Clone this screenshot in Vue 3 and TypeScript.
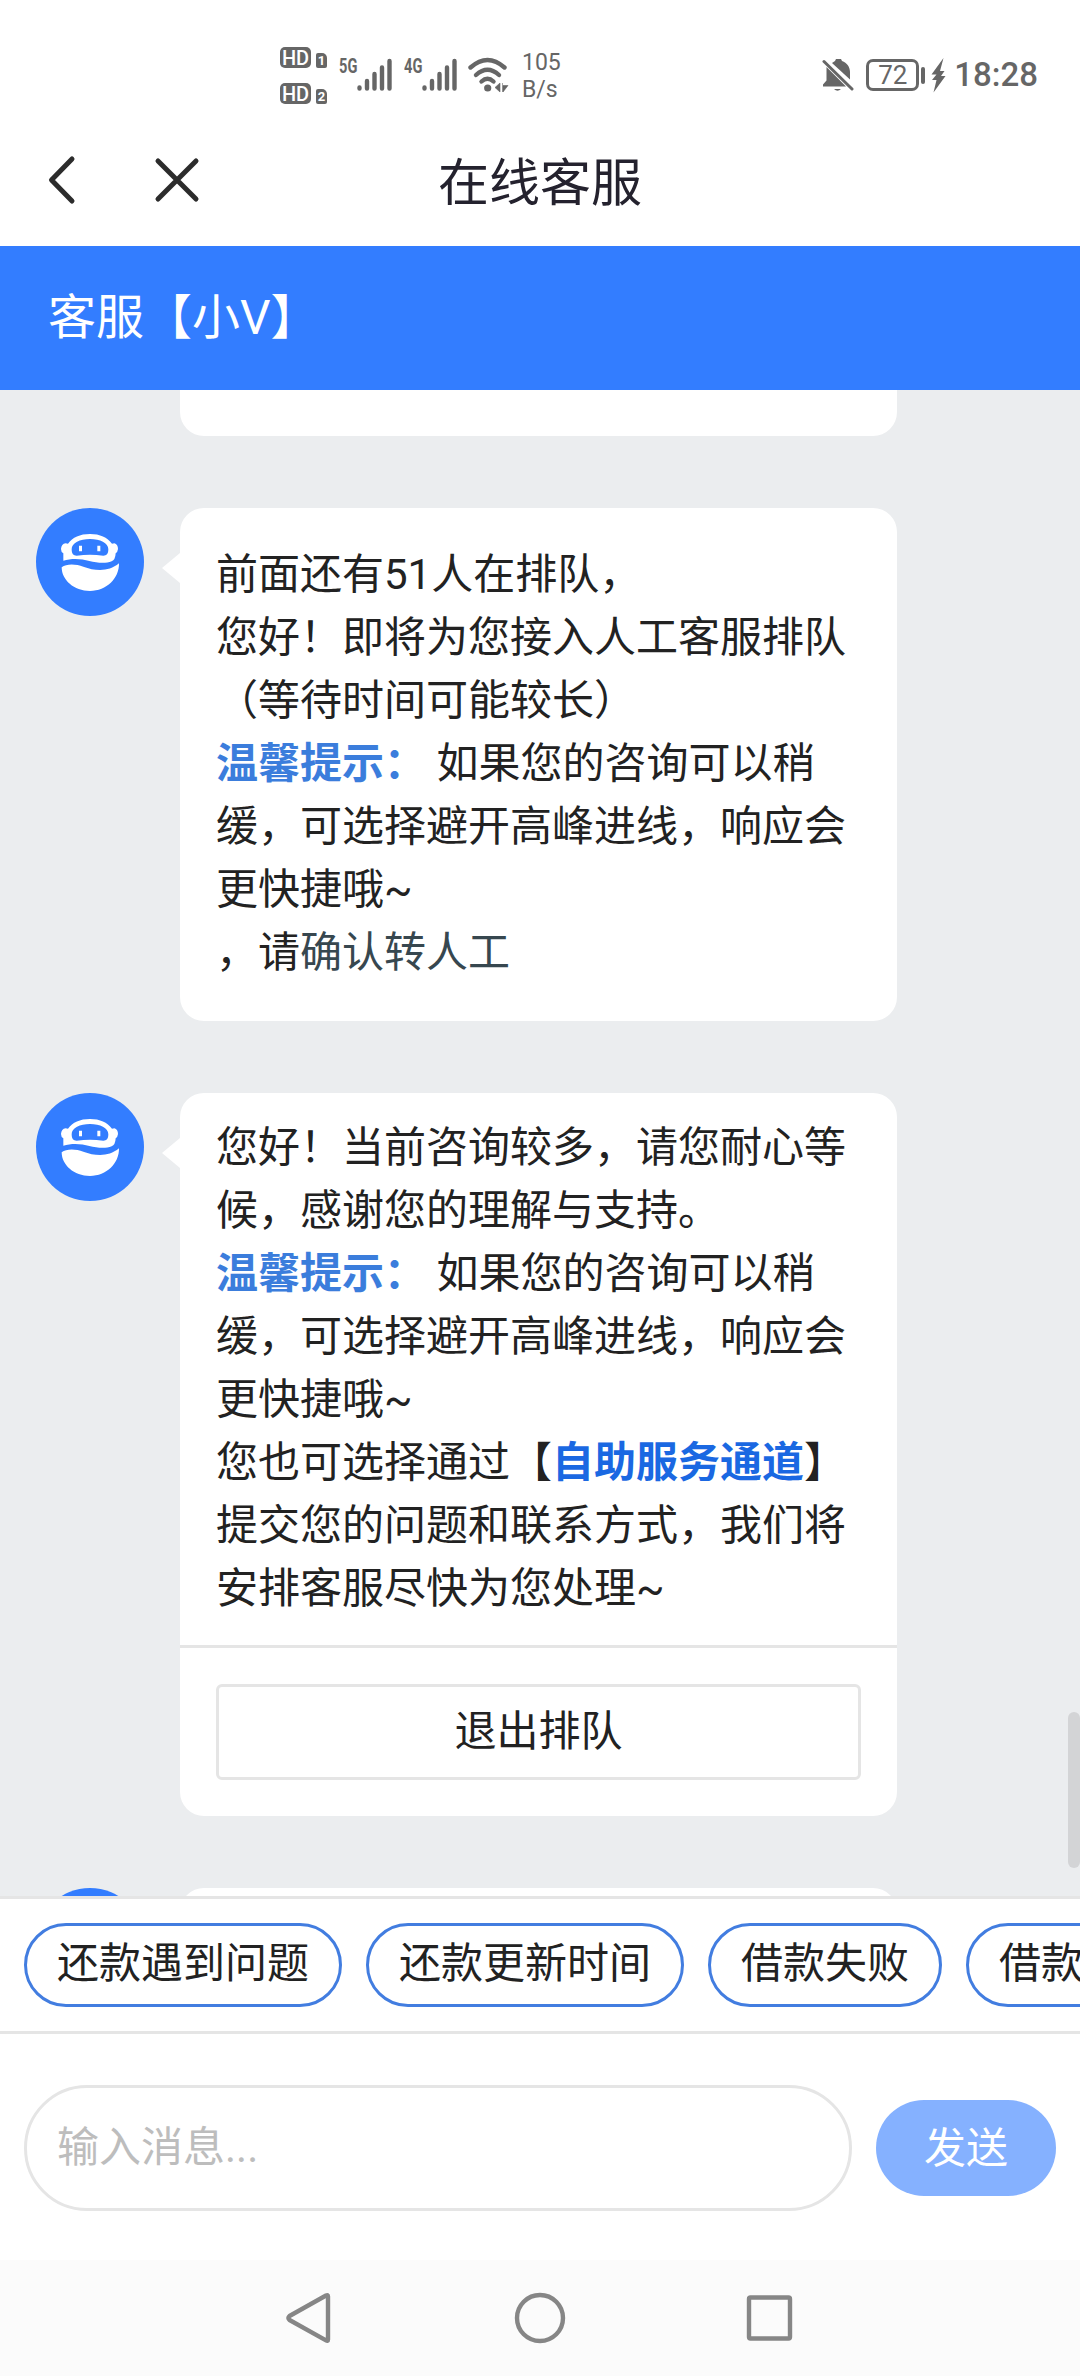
<script setup lang="ts">
const quickReplies: string[] = ['还款遇到问题', '还款更新时间', '借款失败', '借款额度']
const simSlots: number[] = [1, 2]
const networks: string[] = ['5G', '4G']
</script>

<template>
  <div class="phone">
    <header class="top">
      <div class="status">
        <div class="sims">
          <div v-for="n in simSlots" :key="n" class="sim">
            <span class="hd">HD</span><span class="slot">{{ n }}</span>
          </div>
        </div>
        <div v-for="net in networks" :key="net" class="network">
          <span class="gen">{{ net }}</span>
          <svg class="bars" width="36" height="34" viewBox="0 0 36 34">
            <path d="M2.5 29.5v1M10 23v7.5M17.5 16v14.5M25 9.500v21M32.500 3v27.500" />
          </svg>
        </div>
        <svg class="wifi" width="42" height="36" viewBox="0 0 42 36">
          <g fill="none" stroke="#666" stroke-width="4.400" stroke-linecap="round">
            <path d="M2.500 10.500Q19.500-4.500 36.500 10.500" />
            <path d="M8 18Q19.500 7.500 31 18" />
            <path d="M13.500 24.500Q19.500 19 25.500 24.500" />
          </g>
          <circle cx="19.700" cy="31" r="3.600" fill="#666" />
          <path d="M32 26v9l-5-4.500zM34.500 26v9M35 35v-6.500h5z" fill="#666" stroke="#666" stroke-width=".6" />
        </svg>
        <div class="speed"><span>105</span><span>B/s</span></div>
        <div class="status-right">
          <svg width="32" height="34" viewBox="0 0 32 34" fill="#666">
            <path d="M4.500 9L24 28.500H1v-2l3.500-4zM10 5l3-2 1-2h5l1 2c5 1.800 8 6 8 11v7.500z" />
            <path d="M2 3.500L30 31" stroke="#666" stroke-width="3" stroke-linecap="round" />
            <path d="M12 31h7q-3.500 3.500-7 0z" />
          </svg>
          <span class="battery">72</span>
          <span class="nub"></span>
          <svg class="bolt" width="15" height="36" viewBox="0 0 15 36">
            <path d="M12.500 1L.5 17.500h5L1 23h4.500L2.500 35.500 14.500 19H10l3.500-5H9z" fill="#666" />
          </svg>
          <span class="time">18:28</span>
        </div>
      </div>
      <div class="nav">
        <svg class="nav-icons" width="200" height="60" viewBox="0 0 200 60">
          <path d="M72 9L51.500 30 72 51M158 11l38 38M196 11l-38 38" />
        </svg>
        <h1>在线客服</h1>
      </div>
    </header>

    <div class="agent">客服【小V】</div>

    <main class="chat">
      <div class="bubble peek"></div>

      <section class="message">
        <svg class="avatar" viewBox="0 0 324 324">
          <circle cx="162" cy="162" r="162" fill="#337dff" />
          <g id="robot" transform="translate(-108 -84)">
            <path fill="#fff" d="M190 242V220Q183 216 183 207 184 192 197 190L204 191C218 172 240 162 270 162S322 172 336 191L343 190Q354 194 354 207 353 216 347 220 346 240 335 244C315 252 290 248 268 243 245 236 215 234 190 242Z" />
            <path fill="#337dff" d="M215 208C215 188 240 177 270 177S325 188 325 208C325 222 320 227 310 227Q270 221 230 227C220 227 215 222 215 208Z" />
            <path fill="#fff" d="M237 197h9v17h-9zM292 197h9v17h-9z" />
            <path fill="#fff" d="M185 262C200 250 228 252 250 260 285 273 325 277 357 250 358 295 320 333 270 333 222 333 185 300 185 262Z" />
          </g>
        </svg>
        <div class="bubble tail">
          <div class="text roomy">
            前面还有51人在排队，<br />您好！即将为您接入人工客服排队（等待时间可能较长）<br /><b class="tip">温馨提示：</b> 如果您的咨询可以稍缓，可选择避开高峰进线，响应会更快捷哦~<br />，请<a class="confirm">确认转人工</a>
          </div>
        </div>
      </section>

      <section class="message">
        <svg class="avatar" viewBox="0 0 324 324">
          <circle cx="162" cy="162" r="162" fill="#337dff" />
          <use href="#robot" />
        </svg>
        <div class="bubble tail">
          <div class="text">
            您好！当前咨询较多，请您耐心等候，感谢您的理解与支持。<br /><b class="tip">温馨提示：</b> 如果您的咨询可以稍缓，可选择避开高峰进线，响应会更快捷哦~<br />您也可选择通过【<b class="channel">自助服务通道</b>】提交您的问题和联系方式，我们将安排客服尽快为您处理~
          </div>
          <div class="actions"><button class="leave">退出排队</button></div>
        </div>
      </section>

      <section class="message">
        <svg class="avatar" viewBox="0 0 324 324"><circle cx="162" cy="162" r="162" fill="#337dff" /></svg>
        <div class="bubble next"></div>
      </section>
      <span class="scrollbar"></span>
    </main>

    <div class="quick">
      <button v-for="q in quickReplies" :key="q" class="chip">{{ q }}</button>
    </div>

    <div class="composer">
      <div class="field">输入消息...</div>
      <button class="send">发送</button>
    </div>

    <footer class="system">
      <svg width="1080" height="116" viewBox="0 0 1080 116">
        <path d="M328 36.500v43q0 2-2 .8L289.500 60q-2-2 0-4L326 35.500q2-1 2 1z" />
        <circle cx="540" cy="58" r="23" />
        <rect x="749" y="37.500" width="41" height="41" rx="1.500" />
      </svg>
    </footer>
  </div>
</template>

<style>
body {
  margin: 0;
}
</style>

<style scoped>
.phone {
  width: 1080px;
  height: 2376px;
  display: flex;
  flex-direction: column;
  overflow: hidden;
  background: #fff;
  color: #222;
  font-family: Roboto, 'Noto Sans CJK SC', sans-serif;
  font-size: 42px;
  line-height: 63px;
  text-spacing-trim: space-all;
}
button {
  font: inherit;
  color: inherit;
  margin: 0;
  padding: 0;
  background: none;
  border: 0;
  flex: none;
  white-space: nowrap;
}
svg {
  flex: none;
  display: block;
}
.top {
  height: 246px;
  flex: none;
}
.status {
  height: 126px;
  padding: 0 42px 0 280px;
  display: flex;
  align-items: flex-start;
  color: #666;
}
.sims {
  padding-top: 47px;
  width: 59px;
  display: flex;
  flex-direction: column;
  gap: 15px;
}
.sim {
  display: flex;
  align-items: flex-end;
  height: 21px;
  gap: 5px;
}
.hd,
.slot {
  background: #666;
  color: #fff;
  text-align: center;
  font-weight: 500;
}
.hd {
  width: 31px;
  height: 21px;
  border-radius: 5px;
  font-size: 20px;
  line-height: 22px;
}
.slot {
  width: 11px;
  height: 15px;
  border-radius: 2px 5px 2px 2px;
  font-size: 13px;
  line-height: 16px;
  font-weight: 700;
}
.network {
  width: 65px;
  padding-top: 58px;
  display: flex;
}
.gen {
  width: 18px;
  height: 16px;
  font-size: 20px;
  line-height: 17px;
  font-weight: 700;
  transform: scaleX(0.73);
  transform-origin: 0 0;
}
.bars {
  stroke: #666;
  stroke-width: 4.4;
  stroke-linecap: round;
  fill: none;
}
.wifi {
  margin-top: 57px;
  margin-left: -1px;
}
.speed {
  margin: 49px 0 0 12px;
  display: flex;
  flex-direction: column;
  font-size: 23px;
  line-height: 27px;
}
.status-right {
  margin-left: auto;
  margin-top: 57px;
  display: flex;
  align-items: center;
  height: 36px;
}
.battery {
  box-sizing: border-box;
  width: 53px;
  height: 32px;
  margin-left: 12px;
  border: 3px solid #666;
  border-radius: 7px;
  font-size: 26px;
  line-height: 27px;
  text-align: center;
}
.nub {
  width: 4px;
  height: 17px;
  margin: 0 6px 0 2px;
  border-radius: 2px;
  background: #666;
}
.time {
  margin-left: 8px;
  font-size: 33px;
  font-weight: 500;
  line-height: 38px;
  white-space: nowrap;
}
.nav {
  height: 120px;
  position: relative;
}
.nav-icons {
  position: absolute;
  left: 0;
  top: 24px;
  fill: none;
  stroke: #2c2c2c;
  stroke-width: 5;
  stroke-linecap: round;
  stroke-linejoin: round;
}
h1 {
  margin: 0;
  padding-top: 20px;
  text-align: center;
  font-size: 51px;
  line-height: 75px;
  font-weight: 400;
  color: #24222e;
}
.agent {
  height: 144px;
  flex: none;
  box-sizing: border-box;
  padding: 36px 48px;
  background: #337dff;
  color: #fff;
  font-size: 48px;
  line-height: 72px;
}
.chat {
  position: relative;
  height: 1506px;
  flex: none;
  overflow: hidden;
  background: #ebedef;
}
.bubble {
  position: relative;
  width: 717px;
  background: #fff;
  border-radius: 24px;
}
.peek {
  height: 46px;
  margin-left: 180px;
  border-radius: 0 0 24px 24px;
}
.message {
  display: flex;
  align-items: flex-start;
  gap: 36px;
  margin: 72px 0 0 36px;
}
.avatar {
  width: 108px;
  height: 108px;
}
.tail::before {
  content: '';
  position: absolute;
  left: -18px;
  top: 45px;
  border: solid transparent;
  border-width: 15px 18px 15px 0;
  border-right-color: #fff;
}
.text {
  padding: 23px 36px 25px;
}
.roomy {
  padding: 35px 36px 37px;
}
.tip {
  color: #3b7ddc;
}
.channel {
  color: #1a68e2;
}
.confirm {
  color: #37474f;
}
.actions {
  padding: 36px;
  border-top: 3px solid #e5e5e5;
}
.leave {
  display: block;
  box-sizing: border-box;
  width: 645px;
  height: 96px;
  padding-bottom: 2px;
  border: 3px solid #e5e5e5;
  border-radius: 6px;
}
.next {
  height: 120px;
}
.scrollbar {
  position: absolute;
  right: 0;
  top: 1322px;
  width: 12px;
  height: 156px;
  border-radius: 6px;
  background: #d3d4d6;
}
.quick {
  box-sizing: border-box;
  height: 138px;
  flex: none;
  display: flex;
  gap: 24px;
  padding: 24px;
  overflow: hidden;
  border-top: 3px solid #e5e5e5;
  border-bottom: 3px solid #e5e5e5;
}
.chip {
  box-sizing: border-box;
  height: 84px;
  padding: 0 30px 3px;
  border: 3px solid #427de0;
  border-radius: 42px;
}
.composer {
  height: 226px;
  box-sizing: border-box;
  flex: none;
  display: flex;
  align-items: center;
  gap: 24px;
  padding: 2px 24px 0;
}
.field {
  box-sizing: border-box;
  width: 828px;
  height: 126px;
  padding: 28px 30px;
  border: 3px solid #e5e5e5;
  border-radius: 63px;
  color: #bdbdbd;
}
.send {
  width: 180px;
  height: 96px;
  border-radius: 48px;
  background: #85b1ff;
  color: #fff;
}
.system {
  height: 116px;
  background: #fbfbfb;
}
.system svg {
  fill: none;
  stroke: #868686;
  stroke-width: 4.4;
  stroke-linejoin: round;
}
</style>
